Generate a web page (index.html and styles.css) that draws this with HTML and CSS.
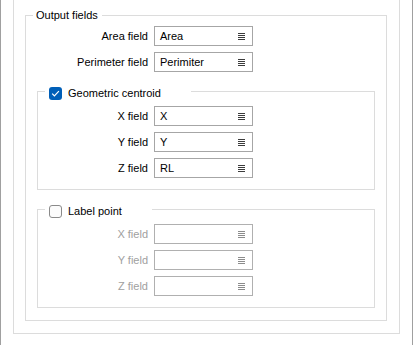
FILE: index.html
```html
<!DOCTYPE html>
<html lang="en">
<head>
    <meta charset="UTF-8">
    <meta name="viewport" content="width=device-width, initial-scale=1.0">
    <title>Output fields</title>
    <link rel="stylesheet" href="styles.css">
</head>
<body>

<div class="frame">
    <div class="panel">

        <fieldset class="group">
            <legend class="title">Output fields</legend>

            <div class="row first">
                <label>Area field</label>
                <div class="combo"><span>Area</span><svg class="pick" width="7" height="7"><rect y="0" width="7" height="1"/><rect y="2" width="7" height="1"/><rect y="4" width="7" height="1"/><rect y="6" width="7" height="1"/></svg></div>
            </div>
            <div class="row">
                <label>Perimeter field</label>
                <div class="combo"><span>Perimiter</span><svg class="pick" width="7" height="7"><rect y="0" width="7" height="1"/><rect y="2" width="7" height="1"/><rect y="4" width="7" height="1"/><rect y="6" width="7" height="1"/></svg></div>
            </div>

            <!-- centroid -->
            <fieldset class="group sub">
                <legend class="check-title">
                    <span class="legend-box">
                        <svg width="13" height="13"><rect x="0" y="0" width="13" height="13" rx="3" fill="#005fb8"/><path d="M3.2 6.6 L5.4 8.8 L9.9 4.2" fill="none" stroke="#fff" stroke-width="1.2"/></svg>
                        <span>Geometric centroid</span>
                    </span>
                </legend>
                <div class="row first">
                    <label>X field</label>
                    <div class="combo"><span>X</span><svg class="pick" width="7" height="7"><rect y="0" width="7" height="1"/><rect y="2" width="7" height="1"/><rect y="4" width="7" height="1"/><rect y="6" width="7" height="1"/></svg></div>
                </div>
                <div class="row">
                    <label>Y field</label>
                    <div class="combo"><span>Y</span><svg class="pick" width="7" height="7"><rect y="0" width="7" height="1"/><rect y="2" width="7" height="1"/><rect y="4" width="7" height="1"/><rect y="6" width="7" height="1"/></svg></div>
                </div>
                <div class="row">
                    <label>Z field</label>
                    <div class="combo"><span>RL</span><svg class="pick" width="7" height="7"><rect y="0" width="7" height="1"/><rect y="2" width="7" height="1"/><rect y="4" width="7" height="1"/><rect y="6" width="7" height="1"/></svg></div>
                </div>
            </fieldset>

            <!-- label point (off) -->
            <fieldset class="group sub off">
                <legend class="check-title">
                    <span class="legend-box">
                        <svg width="13" height="13"><rect x="0.5" y="0.5" width="12" height="12" rx="2.5" fill="#fbfbfb" stroke="#8a8a8a"/></svg>
                        <span>Label point</span>
                    </span>
                </legend>
                <div class="row first">
                    <label>X field</label>
                    <div class="combo"><span></span><svg class="pick" width="7" height="7"><rect y="0" width="7" height="1"/><rect y="2" width="7" height="1"/><rect y="4" width="7" height="1"/><rect y="6" width="7" height="1"/></svg></div>
                </div>
                <div class="row">
                    <label>Y field</label>
                    <div class="combo"><span></span><svg class="pick" width="7" height="7"><rect y="0" width="7" height="1"/><rect y="2" width="7" height="1"/><rect y="4" width="7" height="1"/><rect y="6" width="7" height="1"/></svg></div>
                </div>
                <div class="row">
                    <label>Z field</label>
                    <div class="combo"><span></span><svg class="pick" width="7" height="7"><rect y="0" width="7" height="1"/><rect y="2" width="7" height="1"/><rect y="4" width="7" height="1"/><rect y="6" width="7" height="1"/></svg></div>
                </div>
            </fieldset>
        </fieldset>

    </div>
</div>

</body>
</html>
```

FILE: styles.css
```css
body{
    margin:0;
    background-color:#ffffff;
    font-family:"Liberation Sans", Arial, sans-serif;
    font-size:11px;
    color:#000000;
}

.frame{
    width:413px;
    height:345px;
    box-sizing:border-box;
    border-left:1px solid #a0a0a0;
    border-right:1px solid #a0a0a0;
    overflow:hidden;
}

/* outer panel, top runs off the window */
.panel{
    margin-left:12px;
    width:387px;
    box-sizing:border-box;
    border:1px solid #dcdcdc;
    border-top:none;
    padding:7px 12px 12px 11px;
}

.group{
    margin:0;
    padding:0 11px 12px 11px;
    border:1px solid #dcdcdc;
    min-width:0;
}

/* legend sits after the fieldset padding, so pull it back */
.title{
    margin-left:-4px;
    padding:0 4px 0 3px;
    line-height:16px;
    height:16px;
}

.sub{
    margin-top:9px;
    padding-bottom:11px;
}

.check-title{
    margin-left:-4px;
    padding:4px 30px 0 4px;
}

.legend-box{
    display:flex;
    align-items:center;
    gap:6px;
    height:16px;
}

.legend-box svg{
    display:block;
}

.row{
    display:flex;
    align-items:center;
    height:20px;
    margin-top:6px;
}

.row.first{
    margin-top:3px;
}

.sub .row.first{
    margin-top:5px;
}

.row label{
    width:111px;
    text-align:right;
    margin-right:6px;
}

.sub .row label{
    width:99px;
}

.combo{
    width:99px;
    height:20px;
    box-sizing:border-box;
    border:1px solid #a6a6a6;
    background-color:#ffffff;
    display:flex;
    align-items:center;
    justify-content:space-between;
    padding:0 7px 0 5px;
}

.pick{
    display:block;
    fill:#3c3c3c;
}

.off .row label{
    color:#a0a0a0;
}

.off .combo{
    border-color:#b0b0b0;
}

.off .pick{
    fill:#8c8c8c;
}
```
